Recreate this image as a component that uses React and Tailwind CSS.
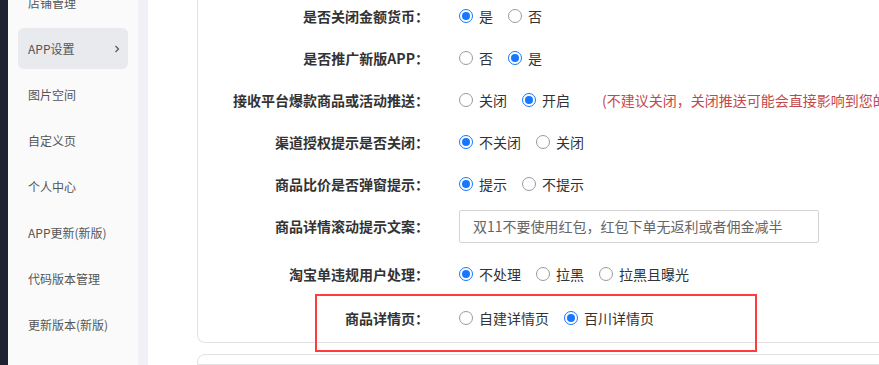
import React from "react";

const font = { fontFamily: '"Noto Sans CJK SC", "Noto Sans", sans-serif' };

function Radio({ checked, label }) {
  return (
    <label className="flex items-center mr-[15px] text-[14px] text-[#333] whitespace-nowrap">
      {checked ? (
        <span className="w-[14px] h-[14px] rounded-full border border-[#1677ff] flex items-center justify-center mr-[6px] shrink-0">
          <span className="w-[8px] h-[8px] rounded-full bg-[#1677ff]" />
        </span>
      ) : (
        <span className="w-[14px] h-[14px] rounded-full border border-[#9a9a9a] bg-white mr-[6px] shrink-0" />
      )}
      <span>{label}</span>
    </label>
  );
}

function Row({ label, h, children }) {
  return (
    <div className={`flex items-center ${h}`}>
      <div className="w-[231px] text-right text-[14px] font-bold text-[#333] whitespace-nowrap shrink-0">{label}</div>
      <div className="ml-[30px] flex items-center">{children}</div>
    </div>
  );
}

const side = ["店铺管理", "APP设置", "图片空间", "自定义页", "个人中心", "APP更新(新版)", "代码版本管理", "更新版本(新版)"];

export default function App() {
  return (
    <div className="relative w-[879px] h-[365px] overflow-hidden flex bg-white" style={font}>
      <div className="w-[8px] bg-[#1f2230] shrink-0" />
      <div className="w-[130px] bg-[#fafafa] shrink-0 px-[10px]">
        <div className="-mt-[18px] flex flex-col gap-[5px]">
          {side.map((s, i) => (
            <div
              key={s}
              className={`h-[41px] rounded-[6px] flex items-center justify-between pl-[10px] pr-[6px] text-[12px] text-[#555] ${i === 1 ? "bg-[#e9eaee]" : ""}`}
            >
              <span>{s}</span>
              {i === 1 && (
                <svg width="10" height="10" viewBox="0 0 10 10" fill="none" stroke="#555" strokeWidth="1.2">
                  <path d="M3.5 2 L6.5 5 L3.5 8" />
                </svg>
              )}
            </div>
          ))}
        </div>
      </div>
      <div className="w-[10px] bg-[#f0f1f6] shrink-0" />
      <div className="flex-1 pl-[49px] flex flex-col">
        <div className="-mt-[20px] border-l border-r border-b border-[#e2e2e2] rounded-b-[8px] pt-[15px] pb-[7px]">
          <Row label="是否关闭金额货币：" h="h-[42px]">
            <Radio checked label="是" />
            <Radio label="否" />
          </Row>
          <Row label="是否推广新版APP：" h="h-[42px]">
            <Radio label="否" />
            <Radio checked label="是" />
          </Row>
          <Row label="接收平台爆款商品或活动推送：" h="h-[42px]">
            <Radio label="关闭" />
            <Radio checked label="开启" />
            <span className="ml-[17px] text-[14px] text-[#c4484b] whitespace-nowrap">(不建议关闭，关闭推送可能会直接影响到您的收益)</span>
          </Row>
          <Row label="渠道授权提示是否关闭：" h="h-[42px]">
            <Radio checked label="不关闭" />
            <Radio label="关闭" />
          </Row>
          <Row label="商品比价是否弹窗提示：" h="h-[42px]">
            <Radio checked label="提示" />
            <Radio label="不提示" />
          </Row>
          <Row label="商品详情滚动提示文案：" h="h-[42px]">
            <div className="w-[360px] h-[33px] border border-[#d4d4d4] rounded-[2px] flex items-center px-[13px] text-[14px] text-[#666] whitespace-nowrap">
              双11不要使用红包，红包下单无返利或者佣金减半
            </div>
          </Row>
          <Row label="淘宝单违规用户处理：" h="h-[54px]">
            <Radio checked label="不处理" />
            <Radio label="拉黑" />
            <Radio label="拉黑且曝光" />
          </Row>
          <Row label="商品详情页：" h="h-[34px]">
            <Radio label="自建详情页" />
            <Radio checked label="百川详情页" />
          </Row>
        </div>
        <div className="mt-[11px] h-[40px] border border-[#e2e2e2] rounded-t-[8px]" />
      </div>
      <div className="absolute left-[315px] top-[294px] w-[442px] h-[58px] border-2 border-[#ff3b3b]" />
    </div>
  );
}
